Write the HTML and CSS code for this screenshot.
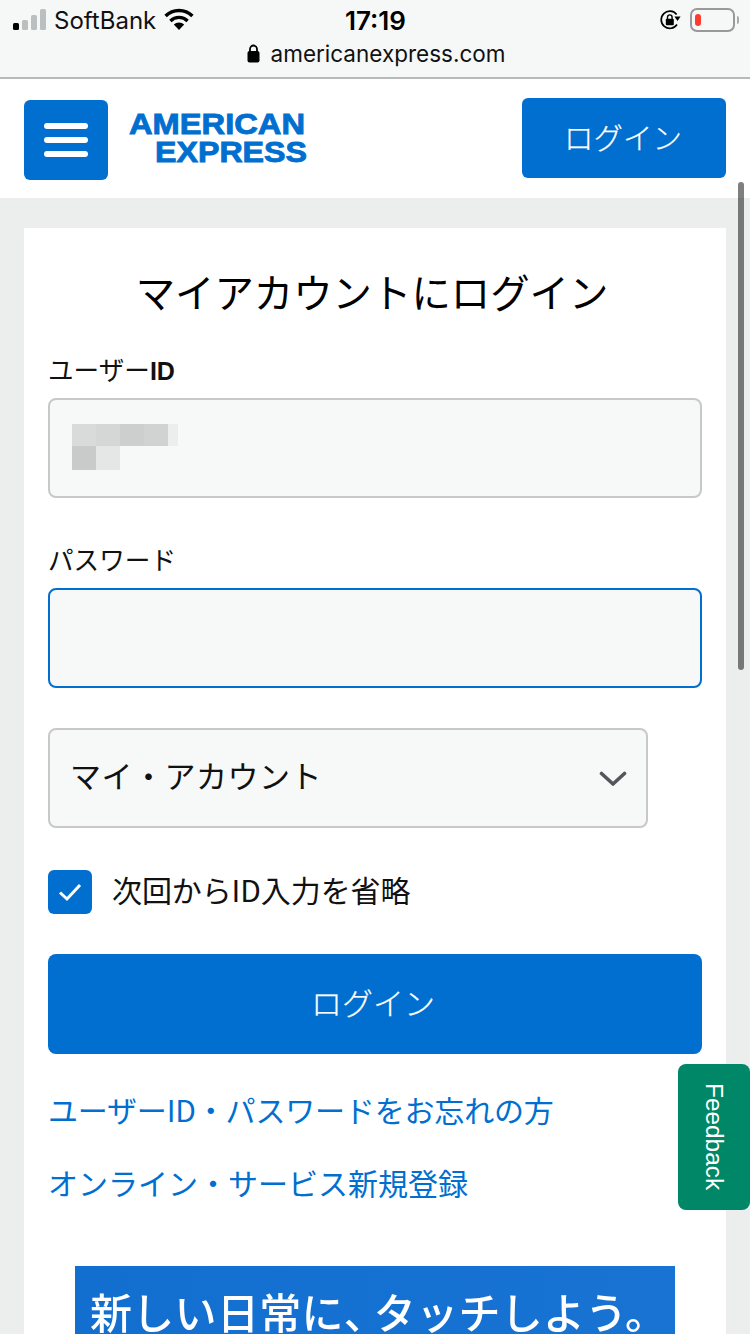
FILE: index.html
```html
<!DOCTYPE html>
<html lang="ja">
<head>
<meta charset="utf-8">
<title>American Express ログイン</title>
<link rel="stylesheet" href="styles.css">
</head>
<body>
<div class="browser-bar">
  <div class="status">
    <div class="status-left">
      <svg class="signal" width="36" height="24" viewBox="0 0 36 24">
        <rect x="1" y="15" width="6" height="7" rx="1.5" fill="#000"/>
        <rect x="10" y="12" width="6" height="10" rx="1.5" fill="#bcbfbf"/>
        <rect x="19" y="7" width="6" height="15" rx="1.5" fill="#bcbfbf"/>
        <rect x="28" y="1" width="6" height="21" rx="1.5" fill="#bcbfbf"/>
      </svg>
      <span class="carrier">SoftBank</span>
      <svg class="wifi" width="30" height="24" viewBox="0 0 30 24">
        <path d="M15 23 L9.8 17.6 A7.4 7.4 0 0 1 20.2 17.6 Z" fill="#000"/>
        <path d="M6.4 14 A12.2 12.2 0 0 1 23.6 14" fill="none" stroke="#000" stroke-width="3.3"/>
        <path d="M1.6 9 A19 19 0 0 1 28.4 9" fill="none" stroke="#000" stroke-width="3.5"/>
      </svg>
    </div>
    <span class="clock">17:19</span>
    <div class="status-right">
      <svg class="rotlock" width="22" height="22" viewBox="0 0 22 22">
        <path d="M18 15.5 A8.6 8.6 0 1 1 17.6 5.5" fill="none" stroke="#000" stroke-width="1.7"/>
        <path d="M15.4 7.6 L21.6 7.6 L18.5 12 Z" fill="#000"/>
        <rect x="6.8" y="9.8" width="8" height="6.4" rx="1" fill="#000"/>
        <path d="M8.5 10 V8.2 A2.3 2.3 0 0 1 13.1 8.2 V10" fill="none" stroke="#000" stroke-width="1.4"/>
      </svg>
      <div class="battery"><div class="battery-level"></div></div>
      <div class="battery-nub"></div>
    </div>
  </div>
  <div class="address">
    <svg class="lock" width="13" height="19" viewBox="0 0 13 19">
      <rect x="0.5" y="7" width="12" height="11.5" rx="2" fill="#000"/>
      <path d="M3 8 V5 A3.5 3.5 0 0 1 10 5 V8" fill="none" stroke="#000" stroke-width="1.8"/>
    </svg>
    <span>americanexpress.com</span>
  </div>
</div>

<header class="site-header">
  <div class="header-left">
    <button class="menu-btn" aria-label="menu">
      <span class="menu-line"></span><span class="menu-line"></span><span class="menu-line"></span>
    </button>
    <svg class="logo" width="182" height="56" viewBox="0 0 182 56">
      <text class="logo-text" x="0" y="26" textLength="176" lengthAdjust="spacingAndGlyphs">AMERICAN</text>
      <text class="logo-text" x="26" y="54" textLength="152" lengthAdjust="spacingAndGlyphs">EXPRESS</text>
    </svg>
  </div>
  <button class="header-login">ログイン</button>
</header>

<main class="page">
  <section class="card">
    <h1 class="title">マイアカウントにログイン</h1>
    <div class="field">
      <label class="label label-first">ユーザー<b>ID</b></label>
      <div class="input">
        <div class="mosaic">
          <div class="mosaic-row">
            <i class="px w24 c1"></i><i class="px w24 c2"></i><i class="px w24 c3"></i><i class="px w24 c4"></i><i class="px w10 c5"></i>
          </div>
          <div class="mosaic-row">
            <i class="px w24 c6"></i><i class="px w24 c7"></i>
          </div>
        </div>
      </div>
    </div>
    <div class="field field-pw">
      <label class="label">パスワード</label>
      <div class="input input-focus"></div>
    </div>
    <div class="select">
      <span>マイ・アカウント</span>
      <svg width="28" height="18" viewBox="0 0 28 18">
        <path d="M2.5 3.5 L14 14 L25.5 3.5" fill="none" stroke="#53565a" stroke-width="3.6" stroke-linecap="round" stroke-linejoin="round"/>
      </svg>
    </div>
    <div class="remember">
      <span class="checkbox">
        <svg width="24" height="20" viewBox="0 0 24 20">
          <path d="M2 10.5 L9 17 L22 3" fill="none" stroke="#fff" stroke-width="3"/>
        </svg>
      </span>
      <span class="remember-text">次回からID入力を省略</span>
    </div>
    <button class="submit">ログイン</button>
    <a class="link link-first">ユーザーID・パスワードをお忘れの方</a>
    <a class="link link-second">オンライン・サービス新規登録</a>
    <div class="banner"><span class="banner-text">新しい日常に<span class="banner-comma">、</span>タッチしよう。</span></div>
  </section>
</main>

<div class="scrollbar"></div>
<div class="feedback"><span>Feedback</span></div>
</body>
</html>
```
FILE: styles.css
```css
* { box-sizing: border-box; }
html, body {
  margin: 0;
  width: 750px;
  height: 1334px;
  overflow: hidden;
}
body {
  position: relative;
  background: #eceeee;
  font-family: "Noto Sans CJK JP", "Noto Sans", sans-serif;
  color: #000;
}
button { font-family: inherit; border: 0; padding: 0; }

.browser-bar {
  height: 79px;
  background: #f6f8f8;
  border-bottom: 2px solid #b8baba;
  display: flex;
  flex-direction: column;
}
.status {
  height: 40px;
  padding: 0 11px 0 12px;
  display: grid;
  grid-template-columns: 1fr auto 1fr;
  align-items: center;
}
.status-left { display: flex; align-items: center; }
.signal { margin-top: -1px; }
.carrier {
  font-family: Inter, "Liberation Sans", sans-serif;
  font-size: 24px;
  margin-left: 6px;
  letter-spacing: 0;
  color: #111;
}
.wifi { margin-left: 8px; margin-top: -2px; }
.clock {
  font-family: Inter, "Liberation Sans", sans-serif;
  font-weight: 600;
  font-size: 26px;
}
.status-right { display: flex; align-items: center; justify-content: flex-end; }
.rotlock { margin-right: 9px; }
.battery {
  width: 45px;
  height: 24px;
  border: 2px solid #999;
  border-radius: 7px;
  padding: 4px 3px;
}
.battery-level {
  width: 6px;
  height: 100%;
  background: #ff3b30;
  border-radius: 3px;
}
.battery-nub {
  width: 2px;
  height: 8px;
  margin-left: 2px;
  background: #aaa;
  border-radius: 0 2px 2px 0;
}
.address {
  height: 36px;
  display: flex;
  align-items: center;
  justify-content: center;
  gap: 11px;
  padding-left: 2px;
  font-family: Inter, "Liberation Sans", sans-serif;
  font-size: 22.5px;
  color: #111;
  margin-top: -5px;
}

.site-header {
  height: 119px;
  background: #fff;
  padding: 19px 24px 0;
  display: flex;
  justify-content: space-between;
  align-items: flex-start;
}
.header-left { display: flex; align-items: flex-start; }
.menu-btn {
  width: 84px;
  height: 80px;
  margin-top: 2px;
  background: #006fcf;
  border-radius: 6px;
  display: flex;
  flex-direction: column;
  justify-content: center;
  align-items: center;
  gap: 8px;
}
.menu-line {
  width: 44px;
  height: 6px;
  border-radius: 3px;
  background: #fff;
}
.logo { margin: 10px 0 0 21px; overflow: visible; }
.logo-text {
  font-family: "Liberation Sans", sans-serif;
  font-weight: 700;
  font-size: 30px;
  fill: #006fcf;
  stroke: #006fcf;
  stroke-width: 0.9px;
}
.header-login {
  width: 204px;
  height: 80px;
  padding: 0 2px 4px 0;
  background: #006fcf;
  color: #fff;
  border-radius: 6px;
  font-size: 29.5px;
  font-weight: 300;
  -webkit-text-stroke: 0.25px #fff;
}

.page { padding: 30px 24px 0; }
.card {
  background: #fff;
  padding: 0 24px;
  height: 1200px;
}
.title {
  margin: 0;
  padding: 33px 6px 0 0;
  font-size: 39.4px;
  line-height: 60px;
  font-weight: 400;
  text-align: center;
}
.field { display: flex; flex-direction: column; }
.label {
  font-size: 25.6px;
  line-height: 30px;
  height: 36px;
  margin-bottom: 8px;
  color: #111;
}
.label-first { margin-top: 33px; }
.label b { font-family: "Liberation Sans", sans-serif; font-weight: 700; font-size: 25px; }
.field-pw { margin-top: 46px; }
.input {
  height: 100px;
  background: #f7f8f8;
  border: 2px solid #c8c9c7;
  border-radius: 8px;
  padding: 24px 22px;
}
.input-focus { border-color: #006fcf; }
.mosaic { display: flex; flex-direction: column; }
.mosaic-row { display: flex; height: 22px; }
.mosaic-row + .mosaic-row { height: 24px; }
.px { display: block; height: 100%; }
.w24 { width: 24px; }
.w10 { width: 10px; }
.c1 { background: #d9dbdb; }
.c2 { background: #d5d7d6; }
.c3 { background: #cdcfce; }
.c4 { background: #d1d3d2; }
.c5 { background: #eceeee; }
.c6 { background: #c9cbca; }
.c7 { background: #e5e7e7; }

.select {
  width: 600px;
  height: 100px;
  margin-top: 40px;
  background: #f7f8f8;
  border: 2px solid #c8c9c7;
  border-radius: 8px;
  padding: 0 19px 0 20px;
  display: flex;
  align-items: center;
  justify-content: space-between;
  font-size: 31px;
  color: #111;
}
.select span { margin-top: -8px; letter-spacing: 0.5px; }
.select svg { margin-top: 2px; }

.remember {
  margin-top: 42px;
  display: flex;
  align-items: center;
  gap: 20px;
}
.checkbox {
  width: 44px;
  height: 44px;
  background: #006fcf;
  border-radius: 6px;
  display: flex;
  align-items: center;
  justify-content: center;
}
.remember-text { font-size: 30px; line-height: 44px; color: #111; margin-top: -7px; letter-spacing: -0.1px; }

.submit {
  display: block;
  width: 654px;
  height: 100px;
  padding: 0 4px 6px 0;
  margin-top: 40px;
  background: #006fcf;
  border-radius: 8px;
  color: #fff;
  font-size: 31px;
  font-weight: 300;
  -webkit-text-stroke: 0.25px #fff;
}
.link {
  display: block;
  color: #006fcf;
  font-size: 30px;
  line-height: 40px;
}
.link-first { margin-top: 35px; letter-spacing: -0.18px; }
.link-second { margin-top: 33px; }

.banner {
  width: 600px;
  height: 200px;
  margin: 64px 0 0 27px;
  padding: 17px 0 0 15px;
  background: linear-gradient(90deg, #126fd0, #1873d3);
}
.banner-text {
  display: block;
  color: #fff;
  font-size: 42px;
  line-height: 56px;
  font-weight: 500;
  white-space: nowrap;
  letter-spacing: 0.3px;
  filter: blur(0.7px);
}
.banner-comma { letter-spacing: -12px; }

.scrollbar {
  position: absolute;
  left: 738px;
  top: 182px;
  width: 6px;
  height: 488px;
  border-radius: 3px;
  background: rgba(0, 0, 0, 0.5);
}
.feedback {
  position: absolute;
  left: 678px;
  top: 1064px;
  width: 72px;
  height: 146px;
  background: #008767;
  border-radius: 8px;
  display: flex;
  align-items: center;
  justify-content: center;
  color: #fff;
  font-family: "Liberation Sans", sans-serif;
  font-size: 24.4px;
}
.feedback span { writing-mode: vertical-rl; }
```
